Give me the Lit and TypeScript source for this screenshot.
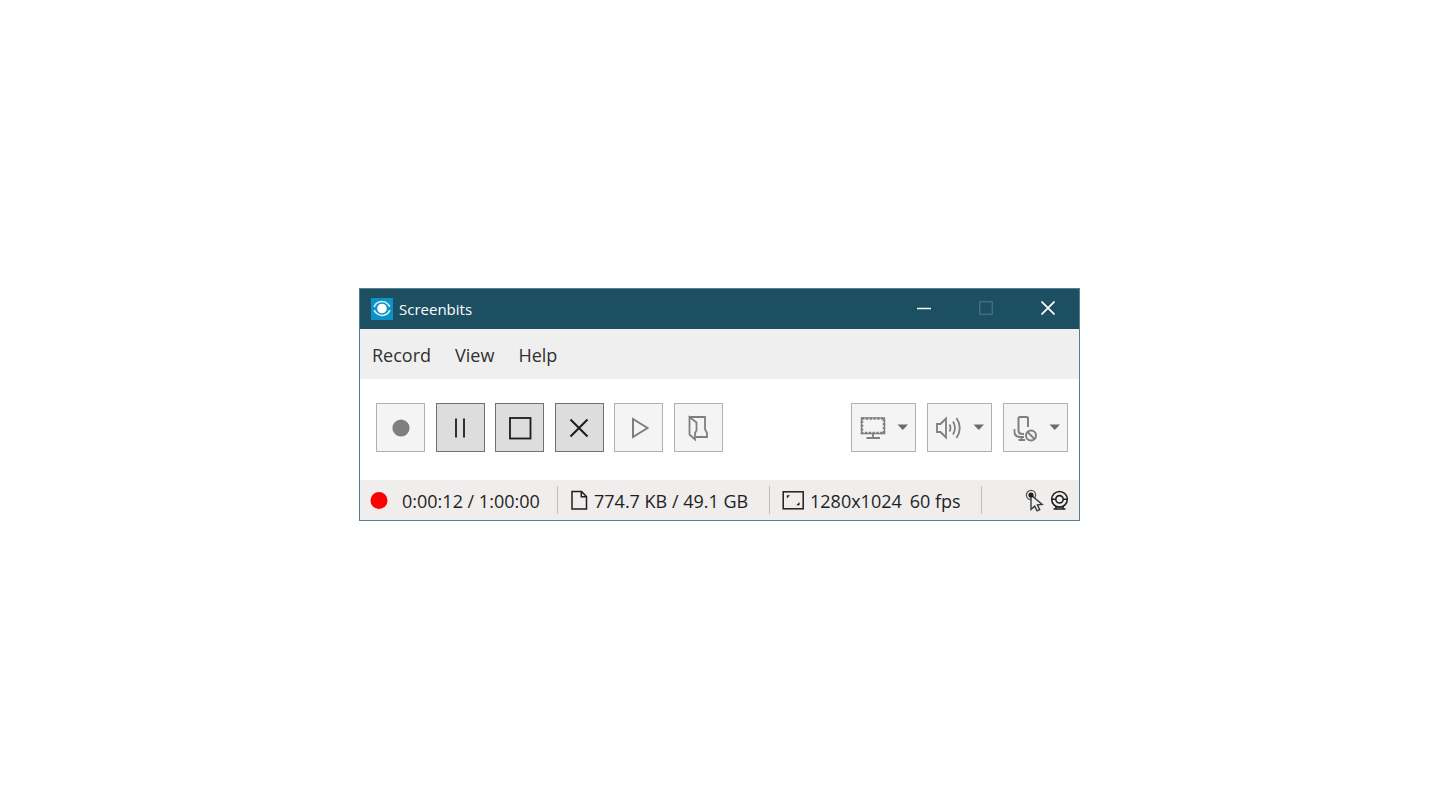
import { LitElement, html, css, svg } from "lit";
import { customElement, property } from "lit/decorators.js";

const icons: Record<string, unknown> = {
  record: svg`<circle cx="14" cy="14" r="8.6" fill="currentColor" stroke="none" />`,
  pause: svg`<path d="M10 4.5v19M18 4.5v19" />`,
  stop: svg`<rect x="4" y="4" width="20.5" height="20.5" />`,
  cancel: svg`<path d="M5.5 5.5l17 17M22.5 5.5l-17 17" stroke-width="2" />`,
  play: svg`<path d="M8 5v18l14.500-9z" stroke-width="2" />`,
  folder: svg`<path d="M5.500 3h15.500v12.200l2 3.800v4h-11M5.500 3v17.500l5.500 5V19l1.500-2.500V8.500z" />`,
  screen: svg`
    <rect x="2.500" y="4" width="23" height="15.500" stroke-width="1.300" />
    <rect x="3" y="4.500" width="22" height="14.500" stroke-width="2.400" stroke-dasharray="2.400 1.400" />
    <path d="M14 20v4M7.500 24H21" />`,
  sound: svg`
    <path d="M2 10h3.500L11 4.500v19L5.500 18H2z" />
    <path d="M14.500 10.500q2 3.500 0 7M18 7.500q4 6.500 0 13M21.500 4q6.500 10 0 20" stroke-width="1.800" />`,
  mic: svg`
    <path d="M7.500 17V4.500Q7.500 3 9 3h6.500Q17 3 17 4.500V13M7.500 17q.5 3 4 3h1.500" stroke-width="2" />
    <path d="M3.500 15v3q0 5 6 5h3.500M10.500 23v3.500M7.500 26H14" />
    <circle cx="20" cy="21.500" r="5" stroke-width="2" />
    <path d="M16.500 18l7 7" stroke-width="2" />`,
};

@customElement("tool-button")
export class ToolButton extends LitElement {
  @property() icon = "";
  @property() label = "";
  @property({ type: Boolean }) active = false;
  @property({ type: Boolean }) menu = false;

  static styles = css`
    :host {
      display: block;
    }
    .tool {
      display: flex;
      align-items: center;
      justify-content: center;
      box-sizing: border-box;
      width: 49px;
      height: 49px;
      margin: 0;
      padding: 0;
      border: 1px solid #adb2b5;
      background: #f4f4f4;
      color: #7f7f7f;
    }
    .active {
      border-color: #707070;
      background: #dddddd;
      color: #1c1c1c;
    }
    .menu {
      width: 65px;
      gap: 10px;
    }
    .icon {
      width: 28px;
      height: 28px;
      fill: none;
      stroke: currentColor;
      stroke-width: 1.8;
    }
    .arrow {
      width: 11px;
      height: 8px;
      fill: #6b6b6b;
    }
  `;

  render() {
    return html`<button
      class="tool ${this.active ? "active" : ""} ${this.menu ? "menu" : ""}"
      type="button"
      aria-label=${this.label}
    >
      <svg class="icon" viewBox="0 0 28 28" aria-hidden="true">${icons[this.icon]}</svg>
      ${this.menu
        ? html`<svg class="arrow" viewBox="0 0 11 8" aria-hidden="true"><path d="M.5.5h10.500L5.750 6z" /></svg>`
        : ""}
    </button>`;
  }
}

@customElement("app-root")
export class AppRoot extends LitElement {
  static styles = css`
    :host {
      display: flex;
      align-items: center;
      justify-content: center;
      box-sizing: border-box;
      min-height: 100vh;
      padding: 0 1px 1px 0;
      background: #ffffff;
      color: #1f1f1f;
      font-family: "Open Sans", "Noto Sans", sans-serif;
      font-size: 18px;
      line-height: 24px;
    }
    button {
      margin: 0;
      padding: 0;
      border: 0;
      background: none;
      color: inherit;
      font: inherit;
    }
    svg {
      display: block;
      flex: none;
      fill: none;
      stroke: currentColor;
    }
    .window {
      width: 100%;
      max-width: 721px;
      box-sizing: border-box;
      border: 1px solid #537f90;
      background: #ffffff;
    }
    .title-bar {
      display: flex;
      align-items: center;
      height: 40px;
      padding-left: 11px;
      background: #1d4f62;
      color: #ffffff;
    }
    .title {
      flex: 1;
      margin: 0;
      padding-left: 6px;
      font-size: 15px;
      font-weight: 400;
    }
    .caption {
      display: flex;
      align-items: center;
      justify-content: center;
      box-sizing: border-box;
      width: 62px;
      height: 40px;
      padding: 0 1px 2px 0;
    }
    .dim {
      color: #49707f;
    }
    .menu-bar {
      display: flex;
      align-items: center;
      gap: 24px;
      height: 50px;
      padding: 0 12px;
      background: #efefef;
    }
    .menu-item {
      padding-top: 2px;
      color: #303030;
    }
    .toolbar {
      display: flex;
      justify-content: space-between;
      padding: 24px 11px 28px 16px;
    }
    .actions {
      display: flex;
      justify-content: space-between;
      width: 347px;
    }
    .sources {
      display: flex;
      gap: 11px;
    }
    .status-bar {
      display: grid;
      grid-template-columns: 198px 212px 212px 1fr;
      align-items: center;
      height: 40px;
      background: #f0eded;
    }
    .cell {
      display: flex;
      align-items: center;
      gap: 6px;
      box-sizing: border-box;
      height: 28px;
      padding-left: 12px;
      border-right: 1px solid #c0bebe;
      white-space: nowrap;
    }
    .cell span {
      padding-top: 1px;
    }
    .time {
      gap: 14px;
      padding-left: 10px;
    }
    .mode {
      display: flex;
      gap: 8px;
    }
    .flags {
      justify-content: flex-end;
      padding-right: 10px;
      border-right: 0;
    }
  `;

  render() {
    return html`
      <main class="window">
        <header class="title-bar">
          <svg width="22" height="22" viewBox="0 0 22 22" aria-hidden="true">
            <rect width="22" height="22" fill="#0b92c6" stroke="none" />
            <circle cx="11" cy="10.500" r="4.800" fill="#ffffff" stroke="none" />
            <path d="M3.200 9A8 7.500 0 0 1 17 6.200l2 2.600M18.800 12A8 7.500 0 0 1 5 14.800l-2-2.600" stroke="#d9f0f8" stroke-width="1.700" />
          </svg>
          <h1 class="title">Screenbits</h1>
          <button class="caption" type="button" aria-label="Minimize">
            <svg width="14" height="14" viewBox="0 0 14 14"><path d="M0 7.500h14" stroke-width="1.500" /></svg>
          </button>
          <button class="caption dim" type="button" aria-label="Maximize">
            <svg width="14" height="14" viewBox="0 0 14 14"><rect x=".75" y=".75" width="12.500" height="12.500" stroke-width="1.300" /></svg>
          </button>
          <button class="caption" type="button" aria-label="Close">
            <svg width="14" height="14" viewBox="0 0 14 14"><path d="M.5.5l13 13M13.500.5l-13 13" stroke-width="1.700" /></svg>
          </button>
        </header>

        <nav class="menu-bar">
          ${["Record", "View", "Help"].map(
            (name) => html`<button class="menu-item" type="button">${name}</button>`
          )}
        </nav>

        <section class="toolbar">
          <div class="actions">
            <tool-button icon="record" label="Record"></tool-button>
            <tool-button icon="pause" label="Pause" active></tool-button>
            <tool-button icon="stop" label="Stop" active></tool-button>
            <tool-button icon="cancel" label="Cancel" active></tool-button>
            <tool-button icon="play" label="Play"></tool-button>
            <tool-button icon="folder" label="Open folder"></tool-button>
          </div>
          <div class="sources">
            <tool-button icon="screen" label="Screen" menu></tool-button>
            <tool-button icon="sound" label="Sound" menu></tool-button>
            <tool-button icon="mic" label="Microphone" menu></tool-button>
          </div>
        </section>

        <footer class="status-bar">
          <div class="cell time">
            <svg width="18" height="18" viewBox="0 0 18 18"><circle cx="9" cy="9.500" r="8.500" fill="#ff0000" stroke="none" /></svg>
            <span>0:00:12 / 1:00:00</span>
          </div>
          <div class="cell">
            <svg width="18" height="20" viewBox="0 0 18 20">
              <path d="M2 1.500h9.500l5 5V19H2z" stroke-width="1.500" />
              <path d="M11.300 1.500v5.200h5.200" stroke-width="1.500" />
            </svg>
            <span>774.7 KB / 49.1 GB</span>
          </div>
          <div class="cell">
            <svg width="22" height="20" viewBox="0 0 22 20">
              <rect x="1.200" y="1.800" width="20" height="17" stroke-width="1.500" />
              <path d="M4.800 8.500V5.200H8zM17.500 12v3.300h-3.200z" fill="currentColor" stroke="none" />
            </svg>
            <span class="mode"><span>1280x1024</span><span>60 fps</span></span>
          </div>
          <div class="cell flags">
            <svg width="19" height="24" viewBox="0 0 19 24" role="img" aria-label="Show cursor">
              <circle cx="6" cy="7" r="4.600" stroke="#555555" stroke-width="1.300" />
              <path d="M6 7v14.500l3.600-3.300 2.500 4.600 2.600-1.200-2.300-4.800 4.800-.4z" fill="#f0eded" stroke="#3a3a3a" stroke-width="1.400" />
              <circle cx="6" cy="7" r="2.600" fill="currentColor" stroke="none" />
            </svg>
            <svg width="19" height="20" viewBox="0 0 19 20" role="img" aria-label="Webcam">
              <circle cx="9.500" cy="9.300" r="7.800" stroke-width="1.600" />
              <circle cx="9.500" cy="9.300" r="3.700" stroke-width="1.600" />
              <path d="M1.500 9.300h4M13.500 9.300h4M6 16v2.500M13 16v2.500M3.500 19h12" stroke-width="1.600" />
            </svg>
          </div>
        </footer>
      </main>
    `;
  }
}
